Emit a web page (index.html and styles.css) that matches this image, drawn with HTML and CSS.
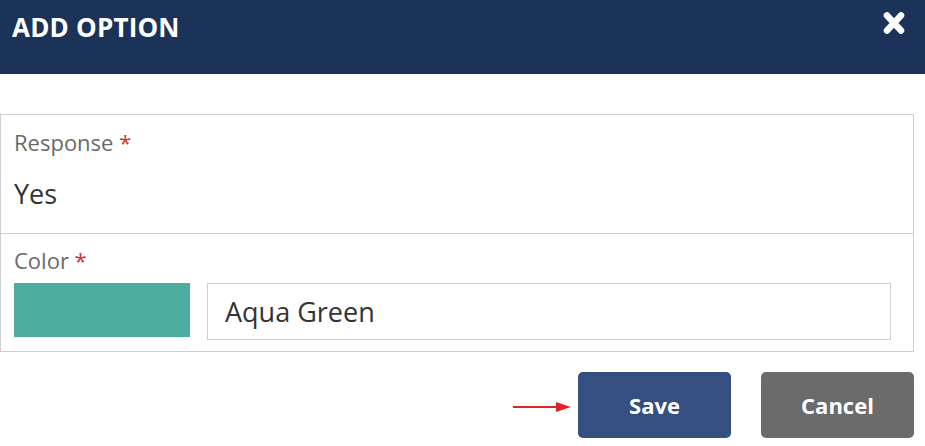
FILE: index.html
```html
<!DOCTYPE html>
<html lang="en">
<head>
<meta charset="utf-8">
<title>Add Option</title>
<link rel="stylesheet" href="styles.css">
</head>
<body>
<div class="modal">
  <header class="modal-header">
    <h1 class="modal-title">ADD OPTION</h1>
    <button class="close-btn" aria-label="Close">
      <svg width="24" height="26" viewBox="0 0 24 26" aria-hidden="true">
        <path d="M5 5.5 L19 20.5 M19 5.5 L5 20.5" stroke="#fff" stroke-width="6.5" stroke-linecap="round" fill="none"/>
      </svg>
    </button>
  </header>
  <div class="modal-body">
    <div class="form-box">
      <div class="field field-response">
        <div class="label">Response <span class="req">*</span></div>
        <div class="value">Yes</div>
      </div>
      <div class="field field-color">
        <div class="label">Color <span class="req">*</span></div>
        <div class="color-row">
          <div class="swatch"></div>
          <div class="color-input">Aqua Green</div>
        </div>
      </div>
    </div>
    <div class="actions">
      <svg class="arrow" width="60" height="12" viewBox="0 0 60 12" aria-hidden="true">
        <line x1="0" y1="6" x2="46" y2="6" stroke="#e0252a" stroke-width="2"/>
        <path d="M43 1 L58 6 L43 11 Z" fill="#e0252a"/>
      </svg>
      <button class="btn btn-save">Save</button>
      <button class="btn btn-cancel">Cancel</button>
    </div>
  </div>
</div>
</body>
</html>
```

FILE: styles.css
```css
* { box-sizing: border-box; }

html, body {
  margin: 0;
  padding: 0;
  background: #fff;
  font-family: "Open Sans", "Liberation Sans", sans-serif;
}

.modal {
  width: 925px;
  height: 446px;
  overflow: hidden;
}

.modal-header {
  height: 74px;
  background: #1b3359;
  display: flex;
  justify-content: space-between;
  align-items: flex-start;
  padding: 12px 19px 0 12px;
}

.modal-title {
  margin: 0;
  color: #fff;
  font-size: 26px;
  font-weight: 700;
  line-height: 30px;
  letter-spacing: 0.2px;
}

.close-btn {
  border: 0;
  background: none;
  padding: 0;
  margin-top: -2px;
  width: 24px;
  height: 26px;
  cursor: pointer;
}

.close-btn svg { display: block; }

.modal-body {
  padding: 40px 11px 0 0;
}

.form-box {
  border: 1px solid #cfcfcf;
}

.field + .field {
  border-top: 1px solid #cfcfcf;
}

.field-response {
  padding: 14px 13px 23px;
}

.field-color {
  padding: 13px 22px 11px 13px;
}

.label {
  font-size: 22px;
  line-height: 26px;
  color: #6a6a6a;
}

.req {
  color: #d2322d;
}

.value {
  margin-top: 23px;
  font-size: 27px;
  line-height: 32px;
  color: #333;
}

.color-row {
  display: flex;
  align-items: flex-start;
  gap: 17px;
  margin-top: 10px;
}

.swatch {
  width: 176px;
  height: 54px;
  background: #4aad9e;
  flex: none;
}

.color-input {
  flex: 1;
  height: 57px;
  border: 1px solid #d0d0d0;
  display: flex;
  align-items: center;
  padding-left: 17px;
  font-size: 27px;
  color: #333;
}

.actions {
  display: flex;
  justify-content: flex-end;
  align-items: center;
  margin-top: 20px;
}

.arrow {
  display: block;
  margin-right: 5px;
  margin-top: 3px;
}

.btn {
  width: 153px;
  height: 66px;
  border: 0;
  border-radius: 5px;
  color: #fff;
  font-family: "Open Sans", "Liberation Sans", sans-serif;
  font-size: 22px;
  font-weight: 700;
  cursor: pointer;
}

.btn-save {
  background: #344f80;
}

.btn-cancel {
  background: #6b6b6b;
  margin-left: 30px;
}
```
